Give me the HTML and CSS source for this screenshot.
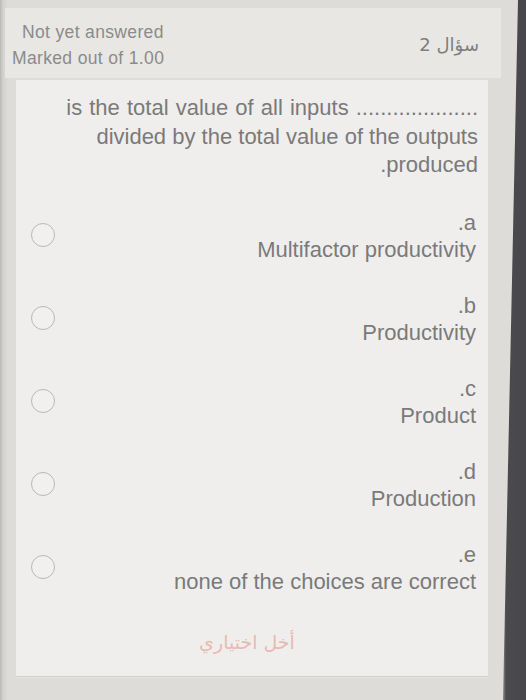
FILE: index.html
```html
<!DOCTYPE html>
<html lang="ar" dir="ltr">
<head>
<meta charset="utf-8">
<link rel="stylesheet" href="styles.css">
</head>
<body>
<div class="screen">
  <div class="main">
    <div class="header">
      <div class="state">
        <div class="s1">Not yet answered</div>
        <div class="s2">Marked out of 1.00</div>
      </div>
      <div class="qno" dir="rtl">سؤال 2</div>
    </div>
    <div class="content">
      <div class="qtext">
        <div class="l1">is the total value of all inputs ....................</div>
        <div>divided by the total value of the outputs</div>
        <div>.produced</div>
      </div>
      <div class="options">
        <div class="opt"><span class="radio"></span><div class="label"><div>.a</div><div>Multifactor productivity</div></div></div>
        <div class="opt"><span class="radio"></span><div class="label"><div>.b</div><div>Productivity</div></div></div>
        <div class="opt"><span class="radio"></span><div class="label"><div>.c</div><div>Product</div></div></div>
        <div class="opt"><span class="radio"></span><div class="label"><div>.d</div><div>Production</div></div></div>
        <div class="opt"><span class="radio"></span><div class="label"><div>.e</div><div>none of the choices are correct</div></div></div>
      </div>
      <div class="clear" dir="rtl">أخل اختياري</div>
    </div>
  </div>
  <div class="bezel"></div>
</div>
</body>
</html>
```
FILE: styles.css
```css
html, body {
  margin: 0;
  padding: 0;
}
body {
  width: 526px;
  height: 700px;
  overflow: hidden;
  background: #d9d8d5;
  font-family: "Liberation Sans", Arial, "Noto Sans", sans-serif;
}
.screen {
  display: flex;
  height: 700px;
  background: linear-gradient(to right, #b9b8b5 0, #d3d2ce 3px, #dedcd9 8px, #dedcd9 100%);
}
.main {
  width: 503px;
  padding-top: 8px;
  display: flex;
  flex-direction: column;
}
.header {
  margin-left: 5px;
  margin-right: 2px;
  height: 70px;
  background: #e8e7e3;
  display: flex;
  justify-content: space-between;
  align-items: center;
  color: #8b8b8b;
}
.state {
  font-size: 17.5px;
  letter-spacing: 0.35px;
  line-height: 26px;
  padding-left: 7px;
  margin-top: 4px;
}
.s1 {
  padding-left: 10px;
}
.qno {
  font-size: 18px;
  font-family: "DejaVu Sans", "Noto Sans", sans-serif;
  color: #7e7e7e;
  padding-right: 22px;
  margin-top: 3px;
}
.content {
  margin: 2px 15px 0 16px;
  height: 596px;
  background: #efeeec;
  border-bottom: 1px solid #d2d1ce;
  box-shadow: 0 1px 1px #e3e2df;
  display: flex;
  flex-direction: column;
  color: #7a7a7a;
}
.qtext {
  text-align: right;
  font-size: 22px;
  line-height: 28.5px;
  padding: 14px 10px 0 0;
}
.l1 {
  word-spacing: 1px;
}
.options {
  margin-top: 29px;
  display: flex;
  flex-direction: column;
  gap: 29px;
}
.opt {
  display: flex;
  align-items: flex-start;
  justify-content: space-between;
  padding: 0 12px 0 15px;
}
.radio {
  width: 24px;
  height: 24px;
  border: 1.3px solid #b8b8b6;
  border-radius: 50%;
  box-sizing: border-box;
  margin-top: 14px;
  background: #f1f0ee;
}
.label {
  text-align: right;
  font-size: 22px;
  line-height: 27px;
}
.clear {
  margin-top: 36px;
  text-align: center;
  font-size: 19px;
  font-family: "DejaVu Sans", "Noto Sans", sans-serif;
  color: #eab9b2;
  padding-right: 10px;
}
.bezel {
  width: 23px;
  background: linear-gradient(to right, #8a898b 0, #4b4a4d 3px, #47464a 100%);
  clip-path: polygon(15px 0, 100% 0, 100% 100%, 0 100%);
}
```
